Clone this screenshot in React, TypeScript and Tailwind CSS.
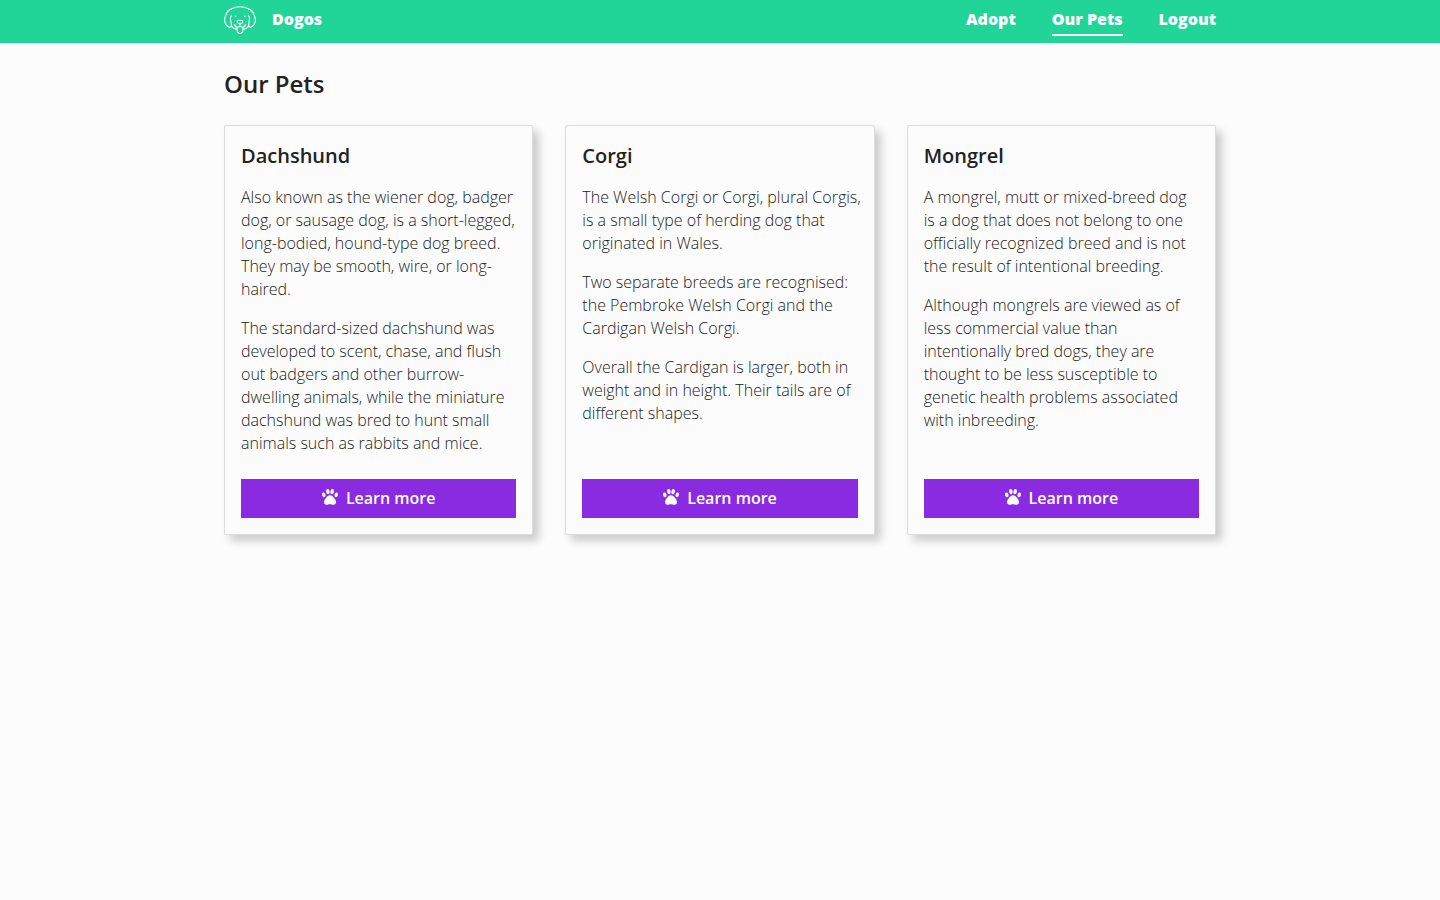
import React from "react";

type Pet = { name: string; paragraphs: string[] };

const pets: Pet[] = [
  {
    name: "Dachshund",
    paragraphs: [
      "Also known as the wiener dog, badger dog, or sausage dog, is a short-legged, long-bodied, hound-type dog breed. They may be smooth, wire, or long-haired.",
      "The standard-sized dachshund was developed to scent, chase, and flush out badgers and other burrow-dwelling animals, while the miniature dachshund was bred to hunt small animals such as rabbits and mice.",
    ],
  },
  {
    name: "Corgi",
    paragraphs: [
      "The Welsh Corgi or Corgi, plural Corgis, is a small type of herding dog that originated in Wales.",
      "Two separate breeds are recognised: the Pembroke Welsh Corgi and the Cardigan Welsh Corgi.",
      "Overall the Cardigan is larger, both in weight and in height. Their tails are of different shapes.",
    ],
  },
  {
    name: "Mongrel",
    paragraphs: [
      "A mongrel, mutt or mixed-breed dog is\u00a0a dog that does not belong to one officially recognized breed and is not the result of intentional breeding.",
      "Although mongrels are viewed as of less commercial value than intentionally bred dogs, they are thought to be less susceptible to genetic health problems associated with inbreeding.",
    ],
  },
];

function DogLogo() {
  return (
    <svg
      viewBox="0 0 32 28"
      className="h-7 w-8"
      fill="none"
      stroke="currentColor"
      strokeWidth="1.1"
      strokeLinecap="round"
      strokeLinejoin="round"
      aria-hidden="true"
    >
      <path d="M7.600 2.900C10 1.400 12.800.8 16 .8s6 .6 8.400 2.100" />
      <path d="M7.600 2.900C4.400 3.600 2.900 6.300 1.900 9 1.100 11.200.5 12.400.6 14.200c.2 3.300 2.800 6.200 4.900 7.200 1.400-.2 2-1.300 1.900-2.900-.1-2-.9-3.600-.9-5.800 0-1.300.4-2.400.9-3.200" />
      <path d="M24.400 2.900c3.200.7 4.700 3.400 5.700 6.100.8 2.200 1.400 3.400 1.300 5.200-.2 3.300-2.800 6.200-4.900 7.200-1.400-.2-2-1.300-1.900-2.900.1-2 .9-3.600.9-5.800 0-1.300-.4-2.400-.9-3.200" />
      <path d="M7.300 19.700c1 1.900 3 3.200 5.400 3.400M24.700 19.700c-1 1.900-3 3.200-5.400 3.400" />
      <path d="M13.200 15.500c0-.9 1.300-1.200 2.800-1.200s2.800.3 2.800 1.200c0 1.200-1.500 2.300-2.800 2.300s-2.800-1.100-2.800-2.300z" />
      <path d="M16 17.800v2.300M10.700 18.200c0 1.800 1.200 3 2.800 3 1.300 0 2.100-.4 2.500-1.100.4.700 1.200 1.100 2.500 1.100 1.600 0 2.800-1.200 2.800-3" />
      <path d="M13 21.400v2.400c0 2.100 1.200 3.600 3 3.600s3-1.500 3-3.600v-2.400" />
      <circle cx="11.500" cy="10.400" r=".8" fill="currentColor" stroke="none" />
      <circle cx="20.800" cy="10.400" r=".8" fill="currentColor" stroke="none" />
    </svg>
  );
}

function PawIcon() {
  return (
    <svg viewBox="0 0 48 48" className="mb-[3px] size-4" fill="currentColor" aria-hidden="true">
      <ellipse cx="17.500" cy="8" rx="5.200" ry="7.800" transform="rotate(-6 17.500 8)" />
      <ellipse cx="30.500" cy="8" rx="5.200" ry="7.800" transform="rotate(6 30.500 8)" />
      <ellipse cx="5.400" cy="17.500" rx="5" ry="7.200" transform="rotate(-14 5.400 17.500)" />
      <ellipse cx="42.600" cy="17.500" rx="5" ry="7.200" transform="rotate(14 42.600 17.500)" />
      <path d="M24 18.500c-5 0-8.500 3.500-11.500 7.500C9 30 6 34 6 39c0 5 3 8.500 7.500 8.500 4 0 6.500-2 10.500-2s6.500 2 10.500 2c4.500 0 7.500-3.500 7.500-8.500 0-5-3-9-6.500-13-3-4-6.500-7.500-11.500-7.500z" />
    </svg>
  );
}

function NavLink({ label, active = false }: { label: string; active?: boolean }) {
  return (
    <a
      href="#"
      aria-current={active ? "page" : undefined}
      className={
        active
          ? "border-b-2 border-white pb-[3px]"
          : "border-b-2 border-transparent pb-[3px]"
      }
    >
      {label}
    </a>
  );
}

function PetCard({ pet }: { pet: Pet }) {
  return (
    <article className="flex flex-col rounded-xs border border-[#ddd] bg-[#fcfcfc] p-4 shadow-[6px_6px_8px_#ccc]">
      <h2 className="mb-4 text-[20px] leading-7 font-semibold">{pet.name}</h2>
      <div className="-mr-1 mb-6 flex grow flex-col gap-4 font-light">
        {pet.paragraphs.map((text) => (
          <p key={text}>{text}</p>
        ))}
      </div>
      <button
        type="button"
        className="flex cursor-pointer items-center justify-center gap-2 bg-[#8a2be2] py-2 font-semibold text-white"
      >
        <PawIcon />
        Learn more
      </button>
    </article>
  );
}

export default function App() {
  return (
    <div className="min-h-screen bg-[#fcfcfc] font-['Open_Sans',sans-serif] text-[16px] leading-[23px] text-[#222]">
      <header className="bg-[#21d598] font-extrabold text-white">
        <div className="mx-auto flex max-w-5xl items-start justify-between px-4 pt-2 pb-[7px]">
          <a href="#" className="flex h-6 items-center gap-4">
            <DogLogo />
            <span className="pb-px">Dogos</span>
          </a>
          <nav className="flex gap-9">
            <NavLink label="Adopt" />
            <NavLink label="Our Pets" active />
            <NavLink label="Logout" />
          </nav>
        </div>
      </header>
      <main className="mx-auto max-w-5xl px-4 py-6">
        <h1 className="mb-6 text-[24px] leading-[34px] font-semibold">Our Pets</h1>
        <div className="grid grid-cols-1 gap-8 md:grid-cols-3">
          {pets.map((pet) => (
            <PetCard key={pet.name} pet={pet} />
          ))}
        </div>
      </main>
    </div>
  );
}
